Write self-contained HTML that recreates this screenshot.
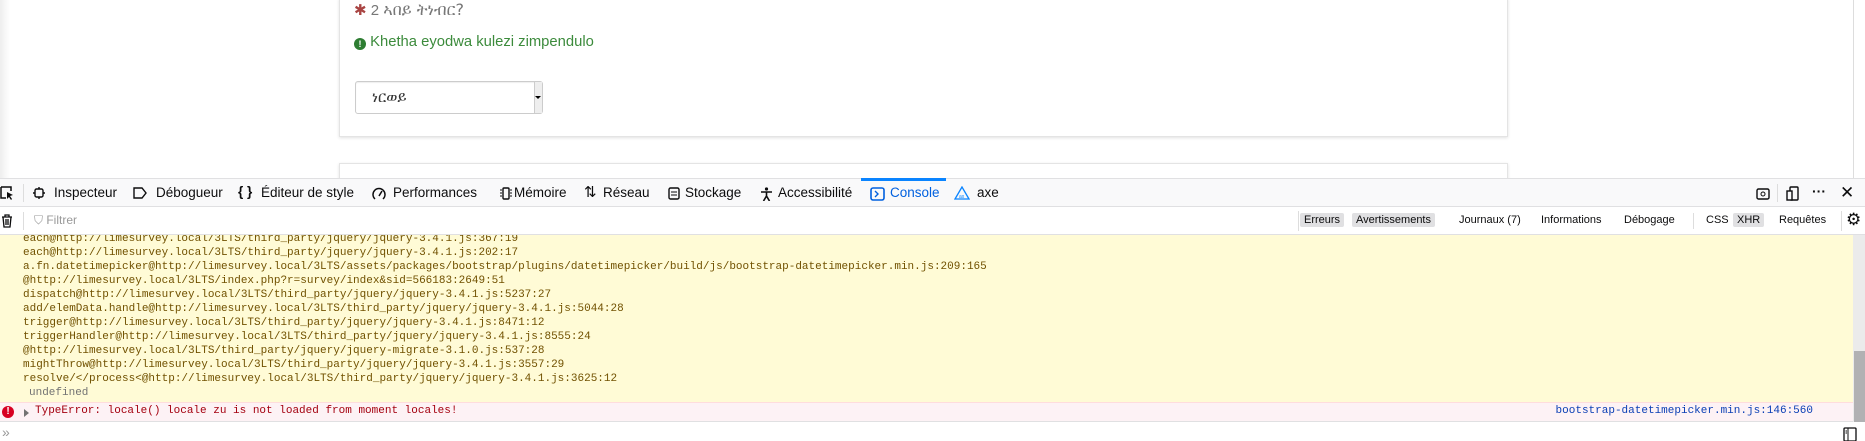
<!DOCTYPE html>
<html><head><meta charset="utf-8"><style>
*{box-sizing:border-box;margin:0;padding:0}
body{width:1865px;height:441px;overflow:hidden;background:#fff;font-family:"Liberation Sans","DejaVu Sans",sans-serif;position:relative}
.abs{position:absolute}
.card{position:absolute;left:339px;width:1169px;background:#fff;border:1px solid #e4e4e4;box-shadow:0 1px 3px rgba(0,0,0,.12)}
.tb{position:absolute;left:0;top:178px;width:1865px;height:29px;background:#f9f9fa;border-top:1px solid #e0e0e2;border-bottom:1px solid #e0e0e2}
.tab{position:absolute;top:6px;font-size:13.5px;color:#0c0c0d;white-space:nowrap}
.ic{position:absolute;top:8px}
.fb{position:absolute;left:0;top:207px;width:1865px;height:28px;background:#fff;border-bottom:1px solid #e0e0e2}
.fbt{position:absolute;top:6px;font-size:11px;color:#0c0c0d;padding:1px 4px;border-radius:2px}
.log{position:absolute;left:0;top:235px;width:1853px;height:167px;background:#fffbd6;overflow:hidden}
.log pre{font-family:"Liberation Mono",monospace;font-size:11px;line-height:14px;color:#715100;margin-top:-3px;padding-left:23px}
.eth{font-family:"DejaVu Sans","Noto Sans CJK SC",sans-serif}
</style></head><body>
<div class="abs" style="left:0;top:0;width:10px;height:178px;background:linear-gradient(90deg,#eee,#fff)"></div>
<div class="abs" style="left:1853px;top:0;width:1px;height:178px;background:#ddd"></div>
<div class="card" style="top:-2px;height:139px"></div>
<div class="card" style="top:163px;height:30px"></div>
<div class="abs" style="left:354px;top:0px;font-size:15px;color:#777;white-space:nowrap"><span style="color:#a94442">✱</span> 2 <span class="eth" style="font-size:16px">ኣበይ ትነብር?</span></div>
<div class="abs" style="left:354px;top:34px;font-size:14.8px;color:#3c8b3c;white-space:nowrap"><span style="display:inline-block;width:12px;height:12px;border-radius:50%;background:#2e7d32;color:#fff;font-size:9px;font-weight:bold;text-align:center;line-height:12px;vertical-align:-1px">!</span> Khetha eyodwa kulezi zimpendulo</div>
<div class="abs" style="left:355px;top:81px;width:188px;height:33px;border:1px solid #ccc;border-radius:3px;box-shadow:inset 0 1px 1px rgba(0,0,0,.07)">
<div class="abs eth" style="left:16px;top:6px;font-size:15px;color:#333">ነርወይ</div>
<div class="abs" style="right:0;top:0;width:8px;height:31px;background:#eee;border-left:1px solid #ccc"></div>
<div class="abs" style="right:1px;top:14px;border-left:3px solid transparent;border-right:3px solid transparent;border-top:3px solid #000"></div>
</div>

<div class="tb">
<svg class="ic" style="left:0;top:7px" width="14" height="14" viewBox="0 0 14 14"><path d="M1 1h10v4M1 1v11h5" fill="none" stroke="#0c0c0d" stroke-width="1.5"/><path d="M7 6l6 3-3 1 2 3-1 1-2-3-2 2z" fill="#0c0c0d"/></svg>
<div class="abs" style="left:23px;top:5px;width:1px;height:18px;background:#ddd"></div>
<svg class="ic" style="left:33px" width="12" height="12"><rect x="2" y="2" width="8" height="8" rx="1.5" fill="none" stroke="#0c0c0d" stroke-width="1.4"/><path d="M6 0v2M6 10v2M0 6h2M10 6h2" stroke="#0c0c0d" stroke-width="1.4"/></svg>
<div class="tab" style="left:54px">Inspecteur</div>
<svg class="ic" style="left:133px" width="14" height="12"><path d="M1 1h8l4 5-4 5H1z" fill="none" stroke="#0c0c0d" stroke-width="1.4"/></svg>
<div class="tab" style="left:156px">Débogueur</div>
<div class="tab" style="left:238px;font-weight:bold;top:5px">{ }</div>
<div class="tab" style="left:261px">Éditeur de style</div>
<svg class="ic" style="left:372px" width="14" height="13"><path d="M3 12A6 6 0 1 1 11 12" fill="none" stroke="#0c0c0d" stroke-width="1.5"/><path d="M7 9l3-5" stroke="#0c0c0d" stroke-width="1.5"/></svg>
<div class="tab" style="left:393px">Performances</div>
<svg class="ic" style="left:500px" width="12" height="13"><rect x="3" y="1" width="6" height="11" rx="1" fill="none" stroke="#0c0c0d" stroke-width="1.4"/><path d="M0 3h2M0 6h2M0 9h2M10 3h2M10 6h2M10 9h2" stroke="#0c0c0d"/></svg>
<div class="tab" style="left:514px">Mémoire</div>
<div class="tab" style="left:584px;top:4px;font-size:15px">⇅</div>
<div class="tab" style="left:603px">Réseau</div>
<svg class="ic" style="left:668px" width="12" height="13"><rect x="1" y="1" width="10" height="11" rx="1.5" fill="none" stroke="#0c0c0d" stroke-width="1.4"/><path d="M3 5h6M3 8h6" stroke="#0c0c0d"/></svg>
<div class="tab" style="left:685px">Stockage</div>
<svg class="ic" style="left:760px" width="13" height="14"><circle cx="6.5" cy="2" r="1.6" fill="#0c0c0d"/><path d="M1 5h11M6.5 5v4M6.5 9l-3 5M6.5 9l3 5" stroke="#0c0c0d" stroke-width="1.6" fill="none"/></svg>
<div class="tab" style="left:778px">Accessibilité</div>
<div class="abs" style="left:861px;top:-1px;width:85px;height:3px;background:#0a84ff"></div>
<svg class="ic" style="left:870px" width="15" height="14"><rect x="1" y="1" width="13" height="12" rx="2" fill="none" stroke="#0060df" stroke-width="1.6"/><path d="M5 4l3 3-3 3" fill="none" stroke="#0060df" stroke-width="1.4"/></svg>
<div class="tab" style="left:890px;color:#0060df">Console</div>
<svg class="ic" style="left:954px;top:7px" width="16" height="15"><path d="M8 1L1 13h14z" fill="none" stroke="#0a84ff" stroke-width="1.3"/><text x="5" y="12" font-size="5" fill="#0a84ff" font-family="Liberation Sans">ax</text></svg>
<div class="tab" style="left:977px">axe</div>
<svg class="ic" style="left:1756px" width="14" height="13"><rect x="1" y="2" width="12" height="10" rx="1.5" fill="none" stroke="#0c0c0d" stroke-width="1.4"/><circle cx="7" cy="7" r="2" fill="none" stroke="#0c0c0d"/></svg>
<div class="abs" style="left:1777px;top:5px;width:1px;height:18px;background:#ddd"></div>
<svg class="ic" style="left:1786px;top:7px" width="14" height="15"><rect x="4" y="1" width="8" height="13" rx="1" fill="none" stroke="#0c0c0d" stroke-width="1.4"/><rect x="1" y="5" width="5" height="9" fill="#f9f9fa" stroke="#0c0c0d" stroke-width="1.4"/></svg>
<div class="tab" style="left:1812px;top:4px;font-size:14px;font-weight:bold">···</div>
<div class="tab" style="left:1840px;top:4px;font-size:17px">✕</div>
</div>

<div class="fb">
<svg class="abs" style="left:1px;top:7px" width="12" height="14"><path d="M1 3h10M4 3V1h4v2M2 3l1 10h6l1-10M5 5v6M7 5v6" fill="none" stroke="#0c0c0d" stroke-width="1.3"/></svg>
<div class="abs" style="left:23px;top:5px;width:1px;height:18px;background:#ddd"></div>
<div class="abs" style="left:34px;top:6px;font-size:12px;color:#999">⛉ Filtrer</div>
<div class="abs" style="left:1298px;top:4px;width:1px;height:20px;background:#ddd"></div>
<div class="fbt" style="left:1300px;background:#e0e0e2">Erreurs</div>
<div class="fbt" style="left:1352px;background:#e0e0e2">Avertissements</div>
<div class="fbt" style="left:1455px">Journaux (7)</div>
<div class="fbt" style="left:1537px">Informations</div>
<div class="fbt" style="left:1620px">Débogage</div>
<div class="abs" style="left:1693px;top:6px;width:1px;height:16px;background:#ddd"></div>
<div class="fbt" style="left:1702px">CSS</div>
<div class="fbt" style="left:1733px;background:#e0e0e2">XHR</div>
<div class="fbt" style="left:1775px">Requêtes</div>
<div class="abs" style="left:1841px;top:4px;width:1px;height:20px;background:#ddd"></div>
<div class="abs" style="left:1846px;top:3px;font-size:17px;color:#0c0c0d">⚙</div>
</div>

<div class="log"><pre>each@http://limesurvey.local/3LTS/third_party/jquery/jquery-3.4.1.js:367:19
each@http://limesurvey.local/3LTS/third_party/jquery/jquery-3.4.1.js:202:17
a.fn.datetimepicker@http://limesurvey.local/3LTS/assets/packages/bootstrap/plugins/datetimepicker/build/js/bootstrap-datetimepicker.min.js:209:165
@http://limesurvey.local/3LTS/index.php?r=survey/index&amp;sid=566183:2649:51
dispatch@http://limesurvey.local/3LTS/third_party/jquery/jquery-3.4.1.js:5237:27
add/elemData.handle@http://limesurvey.local/3LTS/third_party/jquery/jquery-3.4.1.js:5044:28
trigger@http://limesurvey.local/3LTS/third_party/jquery/jquery-3.4.1.js:8471:12
triggerHandler@http://limesurvey.local/3LTS/third_party/jquery/jquery-3.4.1.js:8555:24
@http://limesurvey.local/3LTS/third_party/jquery/jquery-migrate-3.1.0.js:537:28
mightThrow@http://limesurvey.local/3LTS/third_party/jquery/jquery-3.4.1.js:3557:29
resolve/&lt;/process&lt;@http://limesurvey.local/3LTS/third_party/jquery/jquery-3.4.1.js:3625:12
<span style="color:#737373;padding-left:6px">undefined</span></pre></div>
<div class="abs" style="left:1853px;top:235px;width:12px;height:187px;background:#ebebeb"></div>
<div class="abs" style="left:1854px;top:351px;width:11px;height:71px;background:#b1b1b3"></div>

<div class="abs" style="left:0;top:402px;width:1853px;height:20px;background:#fdf2f5;border-top:1px solid #fdd;border-bottom:1px solid #e0e0e2">
<div class="abs" style="left:2px;top:3px;width:12px;height:12px;border-radius:50%;background:#d70022;color:#fff;font-size:10px;font-weight:bold;text-align:center;line-height:12px">!</div>
<div class="abs" style="left:24px;top:6px;border-top:4px solid transparent;border-bottom:4px solid transparent;border-left:5px solid #737373"></div>
<div class="abs" style="left:35px;top:2px;font-family:'Liberation Mono',monospace;font-size:11px;color:#a4000f;white-space:nowrap">TypeError: locale() locale zu is not loaded from moment locales!</div>
<div class="abs" style="right:40px;top:2px;font-family:'Liberation Mono',monospace;font-size:11px;color:#0a3fb5;white-space:nowrap">bootstrap-datetimepicker.min.js:146:560</div>
</div>
<div class="abs" style="left:2px;top:424px;font-size:14px;color:#999">»</div>
<svg class="abs" style="left:1843px;top:427px" width="14" height="14"><rect x="1" y="1" width="12" height="13" rx="1" fill="none" stroke="#0c0c0d" stroke-width="1.3"/><path d="M5 1v13M2.5 4h1.5M2.5 6h1.5" stroke="#0c0c0d"/></svg>
</body></html>
